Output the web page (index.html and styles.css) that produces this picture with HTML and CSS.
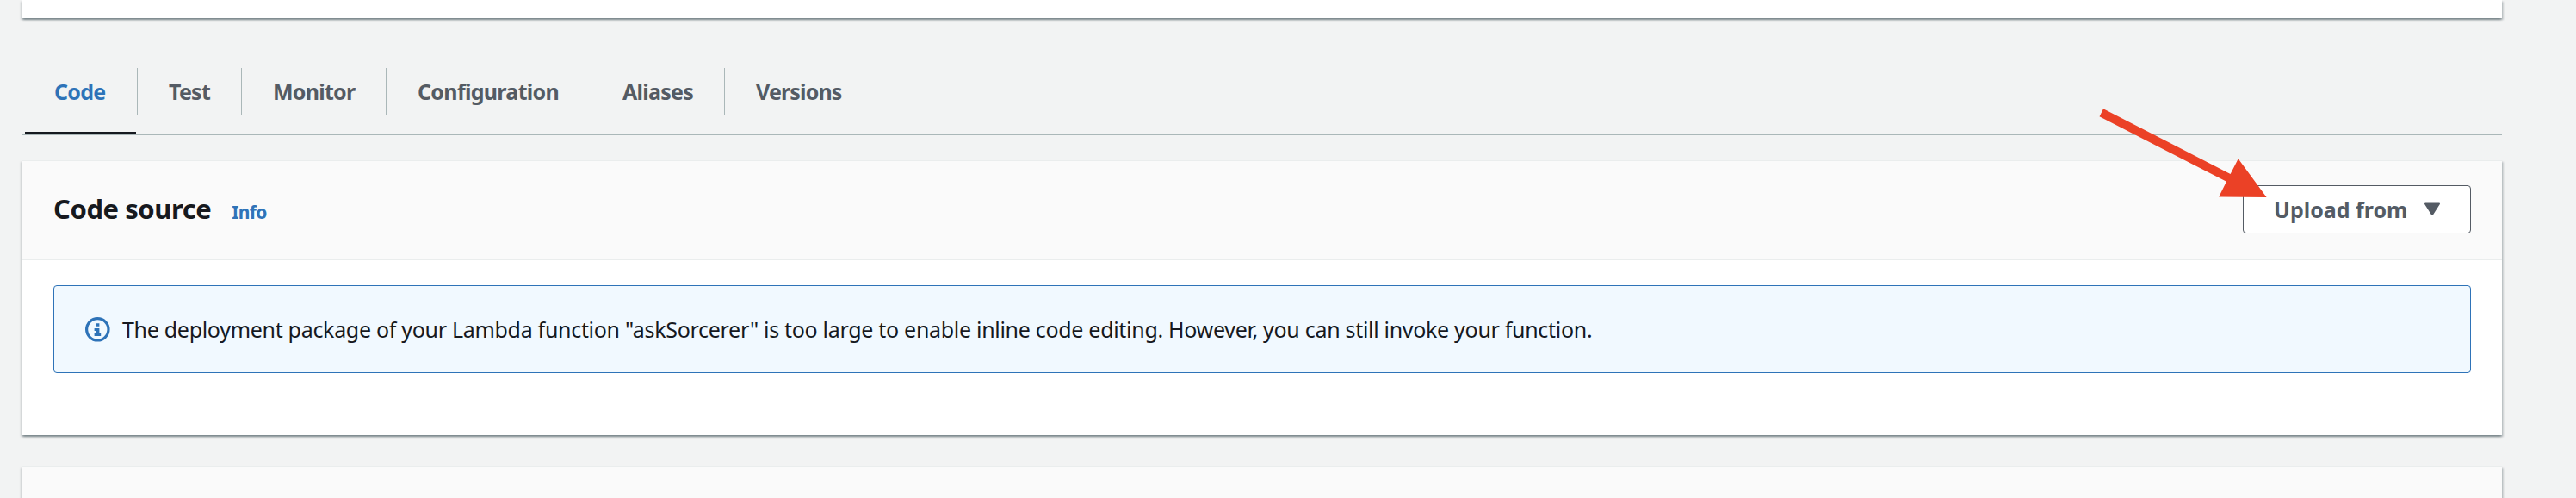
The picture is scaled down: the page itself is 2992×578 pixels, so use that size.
FILE: index.html
```
<!DOCTYPE html>
<html lang="en">
<head>
<meta charset="utf-8">
<title>Lambda function - Code</title>
<link rel="stylesheet" href="styles.css">
</head>
<body>
<main class="page">
  <section class="card card-overview"></section>

  <nav class="tabs">
    <a class="tab tab-code active"><span>Code</span></a>
    <a class="tab tab-test"><span>Test</span></a>
    <a class="tab tab-monitor"><span>Monitor</span></a>
    <a class="tab tab-configuration"><span>Configuration</span></a>
    <a class="tab tab-aliases"><span>Aliases</span></a>
    <a class="tab tab-versions"><span>Versions</span></a>
  </nav>

  <section class="card card-source">
    <header class="card-header">
      <div class="heading">
        <h2 class="title">Code source</h2>
        <a class="info">Info</a>
      </div>
      <button class="upload" type="button">
        <span>Upload from</span>
        <svg class="caret" width="20" height="16" viewBox="0 0 20 16"><path d="M2 1.5h16L10 14z" fill="#545b64" stroke="#545b64" stroke-width="2" stroke-linejoin="round"/></svg>
      </button>
    </header>
    <div class="card-body">
      <div class="alert">
        <svg class="alert-icon" width="30" height="30" viewBox="0 0 30 30">
          <circle cx="15.3" cy="15.3" r="12.7" fill="none" stroke="#2e73b8" stroke-width="3.2"/>
          <path d="M14 8.2h3.4v3.6h-3.4zM11.6 14h5.8v5.8h1.8v3.2h-7.6v-3.2h2.2v-2.8h-2.2z" fill="#2e73b8"/>
        </svg>
        <p class="message">The deployment package of your Lambda function "askSorcerer" is too large to enable inline code editing. However, you can still invoke your function.</p>
      </div>
    </div>
  </section>

  <section class="card card-next"></section>
</main>

<svg class="pointer" width="200" height="110" viewBox="2436 122 200 110">
  <path d="M2443 126.3L2590.6 202L2599.7 184.3L2632.6 229L2577.2 228.4L2586 210.7L2438.5 135.3z" fill="#eb4126"/>
</svg>
</body>
</html>
```
FILE: styles.css
```
* { box-sizing: border-box; }

body {
  margin: 0;
  height: 578px;
  overflow: hidden;
  background: #f2f3f3;
  color: #16191f;
  font-family: "Noto Sans", "Open Sans", sans-serif;
}

.page {
  width: 2880px;
  margin-left: 26px;
  display: flex;
  flex-direction: column;
}

.card {
  background: #fff;
  box-shadow: 0 2px 2px 0 rgba(0, 28, 36, .3),
              2px 2px 2px 0 rgba(0, 28, 36, .15),
              -2px 2px 2px 0 rgba(0, 28, 36, .15);
}

.card-overview { height: 21px; }

.tabs {
  height: 136px;
  padding-top: 58px;
  display: flex;
  border-bottom: 1px solid #aab7b8;
}

.tab {
  height: 77px;
  color: #545b64;
  font-size: 25px;
  font-weight: 700;
  letter-spacing: -.75px;
  line-height: 54px;
}

.tab span {
  display: block;
  height: 54px;
  padding-left: 36px;
  border-right: 1px solid #aab7b8;
}

.tab-code { width: 134px; }
.tab-code span { padding-left: 37px; }
.tab-test { width: 121px; }
.tab-monitor { width: 168px; }
.tab-configuration { width: 238px; letter-spacing: -.68px; }
.tab-aliases { width: 155px; }
.tab-versions { letter-spacing: -.85px; }
.tab-versions span { border-right: 0; }

.tab.active { color: #2e73b8; }
.tab.active::after {
  content: "";
  display: block;
  width: 129px;
  height: 3px;
  margin: 20px 0 0 3px;
  background: #16191f;
}

.card-source {
  height: 319px;
  margin-top: 29px;
  border-top: 1px solid #eaeded;
}

.card-header {
  height: 115px;
  padding: 0 36px 2px;
  display: flex;
  align-items: center;
  justify-content: space-between;
  background: #fafafa;
  border-bottom: 1px solid #eaeded;
}

.heading {
  padding-bottom: 2px;
  display: flex;
  align-items: baseline;
  gap: 24px;
}

.title {
  margin: 0;
  font-size: 31px;
  line-height: 40px;
  letter-spacing: -.45px;
}

.info {
  color: #2e73b8;
  font-size: 21px;
  font-weight: 700;
  letter-spacing: -.7px;
}

.upload {
  width: 265px;
  height: 56px;
  padding: 0 34px 0 35px;
  display: flex;
  align-items: center;
  justify-content: space-between;
  background: #fff;
  border: 1px solid #545b64;
  border-radius: 4px;
  color: #545b64;
  font: 700 25px "Noto Sans", "Open Sans", sans-serif;
}

.card-body { padding: 29px 36px 0; }

.alert {
  height: 102px;
  padding-left: 35px;
  display: flex;
  align-items: center;
  gap: 14px;
  background: #f1f9ff;
  border: 1px solid #2e73b8;
  border-radius: 4px;
}

.message {
  margin: 0;
  font-size: 25px;
  line-height: 44px;
  letter-spacing: -.3px;
  white-space: nowrap;
}

.card-next {
  height: 37px;
  margin-top: 36px;
  background: #fafafa;
  border-top: 1px solid #eaeded;
}

/* Annotation drawn over the header, pointing at the upload button */
.pointer {
  position: absolute;
  left: 2436px;
  top: 122px;
}
```
